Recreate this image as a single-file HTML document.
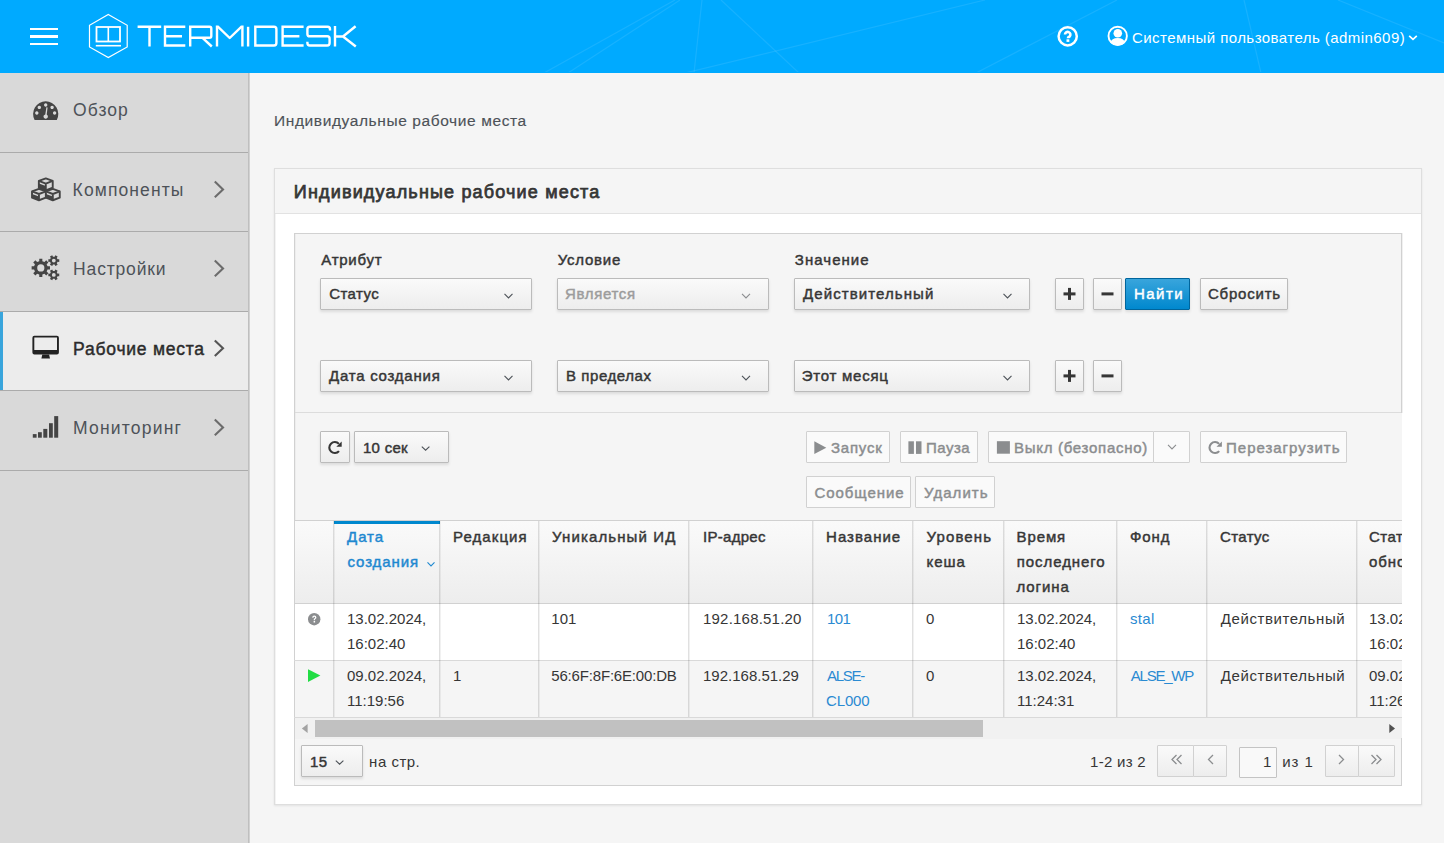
<!DOCTYPE html>
<html><head><meta charset="utf-8">
<style>
*{box-sizing:border-box;margin:0;padding:0}
html,body{width:1444px;height:843px;overflow:hidden}
body{background:#f5f5f5;font-family:"Liberation Sans",sans-serif;font-size:15px;color:#363636;position:relative}
.a{position:absolute}
.t{position:absolute;white-space:nowrap;line-height:15px;font-size:15px}
.b{font-weight:700}
.sb{font-weight:400;-webkit-text-stroke-width:0.45px}
#hdr{left:0;top:0;width:1444px;height:73px;background:#00aaff;overflow:hidden}
#side{left:0;top:73px;width:249px;height:770px;background:#d9d9d9;border-right:1px solid #bfbfbf;box-shadow:1px 0 0 #d2d2d2}
.si{position:absolute;left:0;width:248px;border-bottom:1px solid #ababab}
.st{position:absolute;left:74px;font-size:17.5px;line-height:17.5px;color:#4d5258;white-space:nowrap}
.chev{position:absolute;left:213px;width:11px;height:17px}
.btn{position:absolute;border:1px solid #bbb;border-radius:1px;background:linear-gradient(#fafafa,#ededed);box-shadow:0 2px 3px rgba(3,3,3,.1)}
.dis{position:absolute;border:1px solid #d1d1d1;border-radius:1px;background:#fafafa}
.sel{position:absolute;border:1px solid #bbb;border-radius:1px;background:linear-gradient(#fafafa,#ededed);box-shadow:0 2px 3px rgba(3,3,3,.1);height:32px}
.lnk{color:#0088ce}
</style></head><body>

<!-- HEADER -->
<div id="hdr" class="a">
  <svg class="a" style="left:0;top:0" width="1444" height="72">
    <g stroke="#ffffff" stroke-opacity="0.09" stroke-width="1.2" fill="none">
      <line x1="544" y1="73" x2="675" y2="0"/>
      <line x1="568" y1="73" x2="680" y2="0"/>
      <line x1="694" y1="73" x2="702" y2="0"/>
      <line x1="721" y1="0" x2="799" y2="73"/>
      <line x1="685" y1="73" x2="985" y2="0"/>
      <line x1="976" y1="73" x2="1117" y2="0"/>
      <line x1="1244" y1="0" x2="1261" y2="73"/>
      <line x1="1338" y1="0" x2="1444" y2="43"/>
    </g>
  </svg>
  <div class="a" style="left:30px;top:28px;width:28px;height:2px;background:#fff"></div>
  <div class="a" style="left:30px;top:35px;width:28px;height:3px;background:#fff"></div>
  <div class="a" style="left:30px;top:43px;width:28px;height:2px;background:#fff"></div>
  <svg class="a" style="left:0;top:0" width="400" height="72">
    <g fill="none" stroke="#fff">
      <polygon points="108.3,14.5 127.2,25.3 127.2,47 108.3,57.5 89.5,47 89.5,25.3" stroke-width="1.2"/>
      <rect x="96.5" y="27" width="23.5" height="14.5" stroke-width="1.8"/>
      <line x1="108.3" y1="27" x2="108.3" y2="41.5" stroke-width="1.6"/>
      <line x1="95.8" y1="45.7" x2="121" y2="45.7" stroke-width="1.6"/>
    </g>
    <g fill="none" stroke="#fff" stroke-width="2.4" stroke-linejoin="miter">
      <!-- T -->
      <path d="M137.6 26.8H161.2M149.5 26.8V46.5"/>
      <!-- E -->
      <path d="M185.3 26.8H165V45.5H185.3M165 36.3H182"/>
      <!-- R -->
      <path d="M190.2 46.5V26.8H209.5Q211.3 26.8 211.3 28.6V36Q211.3 37.8 209.5 37.8H190.2M202.5 37.8L211.8 46.5"/>
      <!-- M -->
      <path d="M217 25.6V46.5M242.4 25.6V46.5"/><path d="M217.6 26.4L229.7 38L241.8 26.4" stroke-linejoin="round"/>
      <!-- I -->
      <path d="M248.1 26.8V46.5"/>
      <!-- D -->
      <path d="M255.3 26.8H274Q276.4 26.8 276.4 29.2V43.1Q276.4 45.5 274 45.5H255.3Z"/>
      <!-- E -->
      <path d="M303.6 26.8H282.6V45.5H303.6M282.6 36.3H299.4"/>
      <!-- S -->
      <path d="M330 30.5V29.2Q330 26.8 327.6 26.8H309.8Q307.4 26.8 307.4 29.2V33.9Q307.4 36.3 309.8 36.3H327.2Q329.6 36.3 329.6 38.7V43.1Q329.6 45.5 327.2 45.5H309.8Q307.4 45.5 307.4 43.1V41.8"/>
      <!-- K -->
      <path d="M335 26V46.5M335 36.5H343L355.6 26.2M343 36.5L355.8 46.5"/>
    </g>
  </svg>
  <svg class="a" style="left:1050px;top:20px" width="90" height="32">
    <circle cx="17.7" cy="16.3" r="9.1" fill="none" stroke="#fff" stroke-width="2.5"/>
    <path d="M15 14.6A2.7 2.7 0 1 1 19.6 16.5Q17.9 17.3 17.9 18.3" fill="none" stroke="#fff" stroke-width="2.6"/>
    <rect x="16.5" y="19.3" width="2.8" height="2.6" fill="#fff"/>
    <circle cx="67.7" cy="15.9" r="9.2" fill="none" stroke="#fff" stroke-width="1.9"/>
    <circle cx="67.8" cy="13.3" r="4.3" fill="#fff"/>
    <path d="M60.3 22.6Q61.5 17.9 67.7 17.9Q73.9 17.9 75.1 22.6Q72.2 25.6 67.7 25.6Q63.2 25.6 60.3 22.6Z" fill="#fff"/>
  </svg>
  <div class="t" style="left:1132px;top:30px;color:#fff;letter-spacing:0.446px">Системный пользователь (admin609)</div>
  <svg class="a" style="left:1406px;top:33px" width="14" height="9"><path d="M3.2 2.8L7 6.4L10.8 2.8" fill="none" stroke="#fff" stroke-width="1.7"/></svg>
</div>

<!-- SIDEBAR -->
<div id="side" class="a">
  <div class="si" style="top:0;height:80px"></div>
  <div class="si" style="top:80px;height:79px"></div>
  <div class="si" style="top:159px;height:80px"></div>
  <div class="si" style="top:239px;height:79px;background:#ececec"></div>
  <div class="a" style="left:0;top:239px;width:3px;height:78px;background:#39a5dc"></div>
  <div class="si" style="top:318px;height:80px"></div>
</div>

<!-- sidebar content -->
<svg class="a" style="left:0;top:73px" width="248" height="400">
  <g fill="#444">
    <!-- dashboard: dome x33-58, y100-120 (local y -73) -->
    <path fill-rule="evenodd" d="M33.2 46.8A12.5 12.6 0 0 1 58.2 46.8V46.8Q58.2 43 57.2 46.9L55.6 46.9 33.2 46.9Z M33.2 46.9Q33.1 35 45.7 27.2Q58.3 35 58.2 46.9Z" opacity="0"/>
    <path fill-rule="evenodd" d="M34.6 46.9A12.6 12.6 0 1 1 56.8 46.9Z M45.7 30.3a1.7 1.7 0 1 0 0.01 0Z M39.3 32.7a1.7 1.7 0 1 0 0.01 0Z M52.1 32.7a1.7 1.7 0 1 0 0.01 0Z M36.8 38.3a1.7 1.7 0 1 0 0.01 0Z M54.6 38.3a1.7 1.7 0 1 0 0.01 0Z M46.4 34.2L47.6 34.4 46.7 41.6A2.2 2.2 0 1 1 45.3 41.4Z"/>
  </g>
  <!-- cubes: x30-61, y176.6-201.3 (local 103.6-128.3) -->
  <g transform="translate(45.7 117) scale(0.95) translate(-45.7 -120)"><g stroke="#444" stroke-width="2" stroke-linejoin="round" fill="#d9d9d9">
    <path d="M38.5 110.5L45.8 107.8 53.1 110.5V117.6L45.8 120.4 38.5 117.6Z"/>
    <path d="M38.5 110.5L45.8 113.2 53.1 110.5M45.8 113.2V120.4"/>
    <path d="M31.3 121.5L38.6 118.8 45.9 121.5V128.1L38.6 130.8 31.3 128.1Z"/>
    <path d="M31.3 121.5L38.6 124.2 45.9 121.5M38.6 124.2V130.8"/>
    <path d="M45.9 121.5L53.2 118.8 60.5 121.5V128.1L53.2 130.8 45.9 128.1Z"/>
    <path d="M45.9 121.5L53.2 124.2 60.5 121.5M53.2 124.2V130.8"/>
  </g>
  <g fill="#444">
    <path d="M38.5 113.2L45.8 115.9V120.4L38.5 117.6Z"/>
    <path d="M31.3 124.2L38.6 126.9V130.8L31.3 128.1Z"/>
    <path d="M45.9 124.2L53.2 126.9V130.8L45.9 128.1Z"/>
  </g></g>
  <!-- gears -->
  <g fill="#444" id="gears"><path fill-rule="evenodd" d="M39.24 188.18 L39.27 185.73 L42.33 185.73 L42.36 188.18 L44.45 189.05 L46.21 187.33 L48.37 189.49 L46.65 191.25 L47.52 193.34 L49.97 193.37 L49.97 196.43 L47.52 196.46 L46.65 198.55 L48.37 200.31 L46.21 202.47 L44.45 200.75 L42.36 201.62 L42.33 204.07 L39.27 204.07 L39.24 201.62 L37.15 200.75 L35.39 202.47 L33.23 200.31 L34.95 198.55 L34.08 196.46 L31.63 196.43 L31.63 193.37 L34.08 193.34 L34.95 191.25 L33.23 189.49 L35.39 187.33 L37.15 189.05Z M44.40 194.90 A3.6 3.6 0 1 0 37.20 194.90 A3.6 3.6 0 1 0 44.40 194.90Z"/><path fill-rule="evenodd" d="M54.61 183.68 L55.39 182.23 L57.65 183.54 L56.79 184.94 L57.60 186.34 L59.25 186.29 L59.25 188.91 L57.60 188.86 L56.79 190.26 L57.65 191.66 L55.39 192.97 L54.61 191.52 L52.99 191.52 L52.21 192.97 L49.95 191.66 L50.81 190.26 L50.00 188.86 L48.35 188.91 L48.35 186.29 L50.00 186.34 L50.81 184.94 L49.95 183.54 L52.21 182.23 L52.99 183.68Z M55.70 187.60 A1.9 1.9 0 1 0 51.90 187.60 A1.9 1.9 0 1 0 55.70 187.60Z"/><path fill-rule="evenodd" d="M54.61 197.98 L55.39 196.53 L57.65 197.84 L56.79 199.24 L57.60 200.64 L59.25 200.59 L59.25 203.21 L57.60 203.16 L56.79 204.56 L57.65 205.96 L55.39 207.27 L54.61 205.82 L52.99 205.82 L52.21 207.27 L49.95 205.96 L50.81 204.56 L50.00 203.16 L48.35 203.21 L48.35 200.59 L50.00 200.64 L50.81 199.24 L49.95 197.84 L52.21 196.53 L52.99 197.98Z M55.70 201.90 A1.9 1.9 0 1 0 51.90 201.90 A1.9 1.9 0 1 0 55.70 201.90Z"/></g>
  <!-- monitor: x32.4-58.9 y335.8-358.4 (local 262.8-285.4) -->
  <g fill="#222">
    <path fill-rule="evenodd" d="M34.4 262.8H56.9Q58.9 262.8 58.9 264.8V279.6Q58.9 281.6 56.9 281.6H34.4Q32.4 281.6 32.4 279.6V264.8Q32.4 262.8 34.4 262.8ZM34.3 264.6V277.1H57V264.6Z"/>
    <path d="M42.3 281.5H49.1L50 285.4H41.4Z"/>
  </g>
  <!-- signal: local y = -73 -->
  <g fill="#444">
    <rect x="32.8" y="361.1" width="3.8" height="3.6"/>
    <rect x="38" y="359.2" width="3.8" height="5.5"/>
    <rect x="43.3" y="355.9" width="4" height="8.8"/>
    <rect x="49" y="350.2" width="3.8" height="14.5"/>
    <rect x="54.2" y="343.1" width="4" height="21.6"/>
  </g>
  <g fill="none" stroke="#6c6c6c" stroke-width="2.1">
    <path d="M214.8 108.6L223 116.4 214.8 124.2"/>
    <path d="M214.8 187.6L223 195.4 214.8 203.2"/>
    <path d="M214.8 267.5L223 275.3 214.8 283.1" stroke="#555"/>
    <path d="M214.8 346.6L223 354.4 214.8 362.2"/>
  </g>
</svg>
<div class="st" style="margin-left:-0.9px;top:102px;letter-spacing:1.025px">Обзор</div>
<div class="st" style="margin-left:-1.4px;top:182px;letter-spacing:1.11px">Компоненты</div>
<div class="st" style="margin-left:-0.9px;top:261px;letter-spacing:0.825px">Настройки</div>
<div class="st sb" style="margin-left:-0.9px;top:341px;color:#2b2b2b;letter-spacing:0.768px">Рабочие места</div>
<div class="st" style="margin-left:-0.9px;top:420px;letter-spacing:1.19px">Мониторинг</div>


<!-- MAIN -->
<div class="t" style="left:274.0px;top:113px;color:#4d5258;font-size:15.5px;letter-spacing:0.602px;-webkit-text-stroke:0.15px #4d5258">Индивидуальные рабочие места</div>
<div class="a" style="left:274px;top:168px;width:1148px;height:637px;background:#fff;border:1px solid #dedede;box-shadow:0 1px 2px rgba(3,3,3,.08)"></div>
<div class="a" style="left:275px;top:169px;width:1px;height:635px;background:#f3f3f3"></div>
<div class="a" style="left:275px;top:169px;width:1146px;height:45px;background:#f5f5f5;border-bottom:1px solid #e2e2e2"></div>
<div class="t" style="left:293.8px;top:183px;font-size:18px;line-height:18px;color:#363636;letter-spacing:1.167px;-webkit-text-stroke:0.75px #363636">Индивидуальные рабочие места</div>

<!-- filter container -->
<div class="a" style="left:294px;top:233px;width:1108px;height:553px;background:#f5f5f5;border:1px solid #d1d1d1;border-right:none"></div>
<div class="a" style="left:295px;top:234px;width:1px;height:551px;background:rgba(0,0,0,.03)"></div>
<div class="a" style="left:295px;top:412px;width:1106px;height:1px;background:#dcdcdc"></div>
<div class="a" style="left:1401px;top:233px;width:1px;height:180px;background:#d1d1d1"></div><div class="a" style="left:1402px;top:233px;width:1px;height:180px;background:#f0f0f0"></div>

<div class="t sb" style="letter-spacing:0.766px;left:321.2px;top:252px;color:#363636">Атрибут</div>
<div class="t sb" style="letter-spacing:0.75px;left:557.8px;top:252px;color:#363636">Условие</div>
<div class="t sb" style="letter-spacing:1.045px;left:794.8px;top:252px;color:#363636">Значение</div>

<div class="sel" style="left:320px;top:278px;width:212px"></div>
<div class="sel" style="left:557px;top:278px;width:212px"></div>
<div class="sel" style="left:794px;top:278px;width:236px"></div>
<div class="sel" style="left:320px;top:360px;width:212px"></div>
<div class="sel" style="left:557px;top:360px;width:212px"></div>
<div class="sel" style="left:794px;top:360px;width:236px"></div>

<div class="t sb" style="letter-spacing:0.44px;left:329.2px;top:286px;color:#363636">Статус</div>
<div class="t sb" style="letter-spacing:0.631px;left:565.1px;top:286px;color:#9c9c9c">Является</div>
<div class="t sb" style="letter-spacing:1.091px;left:803px;top:286px;color:#363636">Действительный</div>
<div class="t sb" style="letter-spacing:0.759px;left:329px;top:368px;color:#363636">Дата создания</div>
<div class="t sb" style="letter-spacing:0.565px;left:566px;top:368px;color:#363636">В пределах</div>
<div class="t sb" style="letter-spacing:0.744px;left:801.8px;top:368px;color:#363636">Этот месяц</div>



<div class="btn" style="left:1055px;top:278px;width:29px;height:32px"></div>
<div class="btn" style="left:1093px;top:278px;width:29px;height:32px"></div>
<div class="a" style="left:1125px;top:278px;width:65px;height:32px;border:1px solid #00659c;border-radius:1px;background:linear-gradient(#39a5dc,#0088ce);box-shadow:0 2px 3px rgba(3,3,3,.1)"></div>
<div class="t sb" style="left:1134px;top:286px;color:#fff;letter-spacing:1.45px">Найти</div>
<div class="btn" style="left:1200px;top:278px;width:88px;height:32px"></div>
<div class="t sb" style="letter-spacing:0.774px;left:1208px;top:286px;color:#363636">Сбросить</div>
<div class="btn" style="left:1055px;top:360px;width:29px;height:32px"></div>
<div class="btn" style="left:1093px;top:360px;width:29px;height:32px"></div>
<svg class="a" style="left:0;top:0" width="1444" height="843">
  <g fill="#363636">
    <rect x="1063.5" y="292.4" width="12" height="3"/><rect x="1068" y="287.9" width="3" height="12"/>
    <rect x="1101.5" y="292.4" width="12" height="3"/>
    <rect x="1063.5" y="374.4" width="12" height="3"/><rect x="1068" y="369.9" width="3" height="12"/>
    <rect x="1101.5" y="374.4" width="12" height="3"/>
  </g>
</svg>

<!-- toolbar -->
<div class="btn" style="left:320px;top:431px;width:30px;height:32px"></div>
<div class="sel" style="left:354px;top:431px;width:95px"></div>
<div class="t sb" style="left:363px;top:440px;color:#363636;letter-spacing:0.26px">10 сек</div>

<div class="dis" style="left:806px;top:431px;width:84px;height:32px"></div>
<div class="dis" style="left:900px;top:431px;width:78px;height:32px"></div>
<div class="dis" style="left:988px;top:431px;width:166px;height:32px"></div>
<div class="dis" style="left:1153px;top:431px;width:37px;height:32px"></div>
<div class="dis" style="left:1200px;top:431px;width:147px;height:32px"></div>
<div class="dis" style="left:806px;top:476px;width:105px;height:32px"></div>
<div class="dis" style="left:915px;top:476px;width:80px;height:32px"></div>
<div class="t sb" style="letter-spacing:0.78px;left:831px;top:440px;color:#8b8d8f">Запуск</div>
<div class="t sb" style="letter-spacing:0.5px;left:926px;top:440px;color:#8b8d8f">Пауза</div>
<div class="t sb" style="letter-spacing:0.715px;left:1014px;top:440px;color:#8b8d8f">Выкл (безопасно)</div>
<div class="t sb" style="left:1226.1px;top:440px;color:#8b8d8f;letter-spacing:0.966px">Перезагрузить</div>
<div class="t sb" style="letter-spacing:0.938px;left:814.5px;top:485px;color:#8b8d8f">Сообщение</div>
<div class="t sb" style="left:924px;top:485px;color:#8b8d8f;letter-spacing:1.049px">Удалить</div>
<svg class="a" style="left:0;top:0" width="1444" height="843">
  <g fill="#8b8d8f">
    <path d="M814.3 441.3L826.3 447.7 814.3 454.1Z"/>
    <rect x="908.4" y="441.3" width="5.5" height="12.6"/><rect x="916" y="441.3" width="5.5" height="12.6"/>
    <rect x="996.9" y="441.2" width="13" height="12.5"/>
  </g>
</svg>

<!-- table -->
<div class="a" style="left:295px;top:521px;width:1107px;height:82px;background:linear-gradient(#fafafa,#ededed)"></div>
<div class="a" style="left:295px;top:604px;width:1107px;height:56px;background:#fff"></div>
<div class="a" style="left:295px;top:661px;width:1107px;height:56px;background:#f5f5f5"></div>
<div class="a" style="left:294px;top:520px;width:1108px;height:1px;background:#d1d1d1"></div>
<div class="a" style="left:294px;top:603px;width:1108px;height:1px;background:#d1d1d1"></div>
<div class="a" style="left:294px;top:660px;width:1108px;height:1px;background:#d9d9d9"></div>
<div class="a" style="left:294px;top:717px;width:1108px;height:1px;background:#d9d9d9"></div>
<div class="a" style="left:334px;top:521px;width:106px;height:3px;background:#0088ce"></div>
<div class="a" style="left:333px;top:521px;width:2px;height:196px;background:linear-gradient(90deg,rgba(0,0,0,.12) 50%,rgba(0,0,0,.055) 50%)"></div>
<div class="a" style="left:439px;top:521px;width:2px;height:196px;background:linear-gradient(90deg,rgba(0,0,0,.12) 50%,rgba(0,0,0,.055) 50%)"></div>
<div class="a" style="left:538px;top:521px;width:2px;height:196px;background:linear-gradient(90deg,rgba(0,0,0,.12) 50%,rgba(0,0,0,.055) 50%)"></div>
<div class="a" style="left:688px;top:521px;width:2px;height:196px;background:linear-gradient(90deg,rgba(0,0,0,.12) 50%,rgba(0,0,0,.055) 50%)"></div>
<div class="a" style="left:812px;top:521px;width:2px;height:196px;background:linear-gradient(90deg,rgba(0,0,0,.12) 50%,rgba(0,0,0,.055) 50%)"></div>
<div class="a" style="left:912px;top:521px;width:2px;height:196px;background:linear-gradient(90deg,rgba(0,0,0,.12) 50%,rgba(0,0,0,.055) 50%)"></div>
<div class="a" style="left:1003px;top:521px;width:2px;height:196px;background:linear-gradient(90deg,rgba(0,0,0,.12) 50%,rgba(0,0,0,.055) 50%)"></div>
<div class="a" style="left:1116px;top:521px;width:2px;height:196px;background:linear-gradient(90deg,rgba(0,0,0,.12) 50%,rgba(0,0,0,.055) 50%)"></div>
<div class="a" style="left:1206px;top:521px;width:2px;height:196px;background:linear-gradient(90deg,rgba(0,0,0,.12) 50%,rgba(0,0,0,.055) 50%)"></div>
<div class="a" style="left:1356px;top:521px;width:2px;height:196px;background:linear-gradient(90deg,rgba(0,0,0,.12) 50%,rgba(0,0,0,.055) 50%)"></div>
<div class="t sb" style="left:347.1px;top:529px;color:#1e88d0;letter-spacing:0.9px">Дата</div>
<div class="t sb" style="left:347.5px;top:554px;color:#1e88d0;letter-spacing:0.9px">создания</div>
<div class="t sb" style="letter-spacing:1.083px;left:453px;top:529px;color:#363636;">Редакция</div>
<div class="t sb" style="left:552px;top:529px;color:#363636;letter-spacing:1.127px">Уникальный ИД</div>
<div class="t sb" style="letter-spacing:0.286px;left:703px;top:529px;color:#363636;">IP-адрес</div>
<div class="t sb" style="left:826.1px;top:529px;color:#363636;letter-spacing:1.012px">Название</div>
<div class="t sb" style="left:926.5px;top:529px;color:#363636;letter-spacing:1.117px">Уровень</div>
<div class="t sb" style="left:926.5px;top:554px;color:#363636;letter-spacing:1px">кеша</div>
<div class="t sb" style="left:1016.5px;top:529px;color:#363636;letter-spacing:0.9px">Время</div>
<div class="t sb" style="letter-spacing:0.923px;left:1016.8px;top:554px;color:#363636;">последнего</div>
<div class="t sb" style="left:1016.5px;top:579px;color:#363636;letter-spacing:0.9px">логина</div>
<div class="t sb" style="left:1130px;top:529px;color:#363636;letter-spacing:0.9px">Фонд</div>
<div class="t sb" style="left:1220px;top:529px;color:#363636;letter-spacing:0.36px">Статус</div>
<div class="t " style="left:347px;top:611px;color:#363636;">13.02.2024,</div>
<div class="t " style="left:347px;top:636px;color:#363636;">16:02:40</div>
<div class="t " style="left:551.3px;top:611px;color:#363636;">101</div>
<div class="t " style="letter-spacing:0.208px;left:703px;top:611px;color:#363636;">192.168.51.20</div>
<div class="t " style="letter-spacing:-0.65px;left:827px;top:611px;color:#2a8ad2">101</div>
<div class="t " style="left:926px;top:611px;color:#363636;">0</div>
<div class="t " style="left:1017px;top:611px;color:#363636;">13.02.2024,</div>
<div class="t " style="left:1017px;top:636px;color:#363636;">16:02:40</div>
<div class="t " style="letter-spacing:0.3px;left:1130px;top:611px;color:#2a8ad2">stal</div>
<div class="t " style="left:1220.7px;top:611px;color:#363636;letter-spacing:0.604px">Действительный</div>
<div class="t " style="left:347px;top:668px;color:#363636;">09.02.2024,</div>
<div class="t " style="left:347px;top:693px;color:#363636;">11:19:56</div>
<div class="t " style="left:453px;top:668px;color:#363636;">1</div>
<div class="t " style="left:551.3px;top:668px;color:#363636;letter-spacing:-0.181px">56:6F:8F:6E:00:DB</div>
<div class="t " style="left:703px;top:668px;color:#363636;">192.168.51.29</div>
<div class="t " style="letter-spacing:-1.275px;left:827px;top:668px;color:#2a8ad2">ALSE-</div>
<div class="t " style="letter-spacing:-0.175px;left:826.1px;top:693px;color:#2a8ad2">CL000</div>
<div class="t " style="left:926px;top:668px;color:#363636;">0</div>
<div class="t " style="left:1017px;top:668px;color:#363636;">13.02.2024,</div>
<div class="t " style="left:1017px;top:693px;color:#363636;">11:24:31</div>
<div class="t " style="letter-spacing:-1.232px;left:1130.8px;top:668px;color:#2a8ad2">ALSE_WP</div>
<div class="t " style="left:1220.7px;top:668px;color:#363636;letter-spacing:0.604px">Действительный</div>
<div class="a" style="left:1358px;top:521px;width:44px;height:196px;overflow:hidden">
<div class="t sb" style="left:11px;top:8px;color:#363636;letter-spacing:0.5px">Стат</div>
<div class="t sb" style="left:11px;top:33px;color:#363636;letter-spacing:0.9px">обно</div>
<div class="t " style="left:11px;top:90px;color:#363636;">13.02.2024,</div>
<div class="t " style="left:11px;top:115px;color:#363636;">16:02:40</div>
<div class="t " style="left:11px;top:147px;color:#363636;">09.02.2024,</div>
<div class="t " style="left:11px;top:172px;color:#363636;">11:26:10</div>
</div>
<div class="a" style="left:295px;top:718px;width:1107px;height:21px;background:#f1f1f1"></div>
<div class="a" style="left:315px;top:720px;width:668px;height:17px;background:#c1c1c1"></div>
<div class="a" style="left:295px;top:739px;width:1106px;height:46px;background:#f5f5f5"></div>
<div class="a" style="left:294px;top:785px;width:1108px;height:1px;background:#d1d1d1"></div>
<div class="a" style="left:1401px;top:738px;width:1px;height:48px;background:#d1d1d1"></div>
<div class="sel" style="left:301px;top:745px;width:62px"></div>
<div class="t sb" style="left:310px;top:754px;color:#363636;letter-spacing:0.3px">15</div>
<div class="t " style="letter-spacing:0.5px;left:369.1px;top:754px;color:#363636">на стр.</div>
<div class="t " style="letter-spacing:0.286px;left:1090px;top:754px;color:#363636">1-2 из 2</div>
<div class="dis" style="left:1157px;top:745px;width:37px;height:32px;background:linear-gradient(#fafafa,#ededed);border-color:#d1d1d1"></div>
<div class="dis" style="left:1193px;top:745px;width:34px;height:32px;background:linear-gradient(#fafafa,#ededed);border-color:#d1d1d1"></div>
<div class="a" style="left:1239px;top:747px;width:38px;height:31px;background:#f9f9f9;border:1px solid #c4c4c4;border-radius:1px"></div>
<div class="dis" style="left:1325px;top:745px;width:34px;height:32px;background:linear-gradient(#fafafa,#ededed);border-color:#d1d1d1"></div>
<div class="dis" style="left:1358px;top:745px;width:37px;height:32px;background:linear-gradient(#fafafa,#ededed);border-color:#d1d1d1"></div>
<div class="t " style="left:1263px;top:754px;color:#363636">1</div>
<div class="t " style="letter-spacing:0.932px;left:1282.2px;top:754px;color:#363636">из 1</div>

<svg class="a" style="left:0;top:0" width="1444" height="843">
  <g fill="none" stroke="#4d5258" stroke-width="1.1" transform="translate(0 -0.6)">
    <path d="M504.5 294.5L508.5 298.5 512.5 294.5"/>
    <path d="M742 294.5L746 298.5 750 294.5" stroke="#8b8d8f"/>
    <path d="M1003.5 294.5L1007.5 298.5 1011.5 294.5"/>
    <path d="M504.5 376.5L508.5 380.5 512.5 376.5"/>
    <path d="M742 376.5L746 380.5 750 376.5"/>
    <path d="M1003.5 376.5L1007.5 380.5 1011.5 376.5"/>
    <path d="M421.8 447.2L425.6 450.8 429.4 447.2"/>
    <path d="M1168 445.5L1172 449.5 1176 445.5" stroke="#8b8d8f"/>
    <path d="M335.8 761.2L339.6 764.8 343.4 761.2"/>
    <path d="M427.5 563L431 566.5 434.5 563" stroke="#1e88d0"/>
  </g>
  <!-- refresh icons -->
  <g id="rf"><path d="M339 451.1A5.5 5.5 0 1 1 338.9 443.9" fill="none" stroke="#363636" stroke-width="2.1"/>
  <path d="M341.7 441.4V446.8H336.3Z" fill="#363636"/></g>
  <g transform="translate(880.2 0)"><path d="M339 451.1A5.5 5.5 0 1 1 338.9 443.9" fill="none" stroke="#8b8d8f" stroke-width="2.1"/>
  <path d="M341.7 441.4V446.8H336.3Z" fill="#8b8d8f"/></g>
  <!-- row icons -->
  <circle cx="314.2" cy="619.2" r="6.2" fill="#8b8d8f"/>
  <path d="M312.2 617.8Q312.2 615.6 314.3 615.6Q316.4 615.6 316.4 617.5Q316.4 618.6 315.3 619.1Q315 619.3 315 620.2H313.7Q313.6 618.7 314.5 618.2Q315.1 617.9 315.1 617.4Q315.1 616.8 314.3 616.8Q313.5 616.8 313.5 617.8Z" fill="#fff"/>
  <rect x="313.6" y="621" width="1.5" height="1.5" fill="#fff"/>
  <path d="M308 669.2L320.4 675.6 308 682Z" fill="#22dd44"/>
  <!-- scroll arrows -->
  <path d="M307.6 723.9L301.9 728.4 307.6 732.9Z" fill="#a3a3a3"/>
  <path d="M1389.3 723.9L1395 728.4 1389.3 732.9Z" fill="#505050"/>
  <!-- pagination -->
  <g fill="none" stroke="#8b8d8f" stroke-width="1.3">
    <path d="M1176.5 755L1172 759.5 1176.5 764M1181.5 755L1177 759.5 1181.5 764"/>
    <path d="M1213 755L1208.5 759.5 1213 764"/>
    <path d="M1339 755L1343.5 759.5 1339 764"/>
    <path d="M1371.5 755L1376 759.5 1371.5 764M1376.5 755L1381 759.5 1376.5 764"/>
  </g>
</svg>


</body></html>
